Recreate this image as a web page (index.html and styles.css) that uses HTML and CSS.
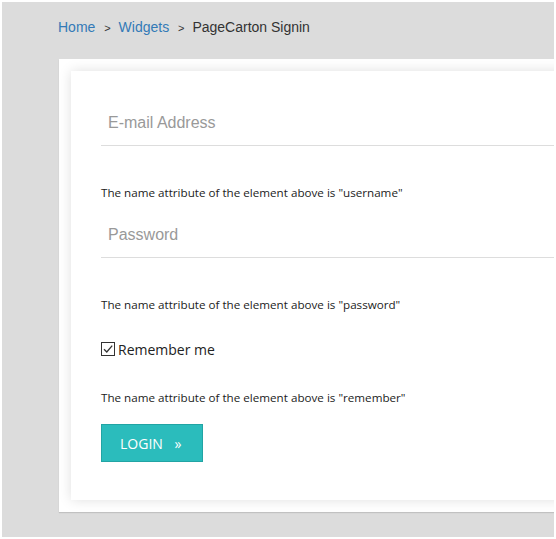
FILE: index.html
```html
<!DOCTYPE html>
<html lang="en">
<head>
    <meta charset="UTF-8">
    <meta name="viewport" content="width=device-width, initial-scale=1.0">
    <title>PageCarton Signin</title>
    <link rel="stylesheet" href="styles.css">
</head>
<body>
    <div class="page">
        <div class="breadcrumb">
            <a href="#">Home</a>
            <span class="sep">&gt;</span>
            <a href="#">Widgets</a>
            <span class="sep">&gt;</span>
            <span class="current">PageCarton Signin</span>
        </div>

        <div class="frame">
            <form class="card">
                <input class="field" type="text" name="username" placeholder="E-mail Address">
                <p class="hint">The name attribute of the element above is "username"</p>

                <input class="field" type="password" name="password" placeholder="Password">
                <p class="hint">The name attribute of the element above is "password"</p>

                <label class="remember">
                    <span class="box">
                        <svg width="12" height="12" viewBox="0 0 12 12"><path d="M2 6.2 L4.8 9 L10.2 2.6" fill="none" stroke="#333" stroke-width="1.3"/></svg>
                    </span>
                    Remember me
                </label>
                <p class="hint hint-last">The name attribute of the element above is "remember"</p>

                <button type="submit" class="login">LOGIN <span class="arrows">&raquo;</span></button>
            </form>
        </div>
    </div>
</body>
</html>
```

FILE: styles.css
```css
body { margin: 0; background: #fff; }
.page { margin: 2px; height: 535px; background: #dcdcdc; overflow: hidden; font-family: "Liberation Sans", Arial, sans-serif; }

.breadcrumb { padding: 15px 0 0 56px; height: 20px; line-height: 20px; font-size: 14px; color: #333; white-space: nowrap; }
.breadcrumb a { color: #337ab7; text-decoration: none; }
.breadcrumb .sep { font-size: 11px; margin: 0 4px 0 5px; }

.frame { margin: 22px 0 0 57px; width: 620px; padding: 12px; background: #fff; box-shadow: 0 1px 1px rgba(0,0,0,0.12); }
.card { display: flex; flex-direction: column; align-items: flex-start; padding: 30px 30px 38px; background: #fff; box-shadow: 0 0 12px rgba(0,0,0,0.13); }

.field { width: 100%; height: 45px; box-sizing: border-box; border: none; border-bottom: 1px solid #ddd; padding: 0 7px; font-family: "Liberation Sans", Arial, sans-serif; font-size: 16px; color: #555; outline: none; background: transparent; }
.field::placeholder { color: #999; }

.hint { margin: 38px 0 12px; font-family: "Open Sans", sans-serif; font-size: 11.65px; line-height: 17px; color: #222; }
.hint-last { margin: 30px 0 18px; }

.remember { display: flex; align-items: center; margin-top: 14px; height: 20px; font-family: "Open Sans", sans-serif; font-size: 14px; color: #222; }
.remember .box { display: flex; align-items: center; justify-content: center; width: 12px; height: 12px; border: 1px solid #333; margin-right: 3px; }

.login { height: 38px; padding: 0 21px 0 18px; background: #2bbcbc; border: 1px solid #22a4a4; color: #fff; font-family: "Open Sans", sans-serif; font-size: 14px; cursor: pointer; }
.login .arrows { margin-left: 8px; }
```
